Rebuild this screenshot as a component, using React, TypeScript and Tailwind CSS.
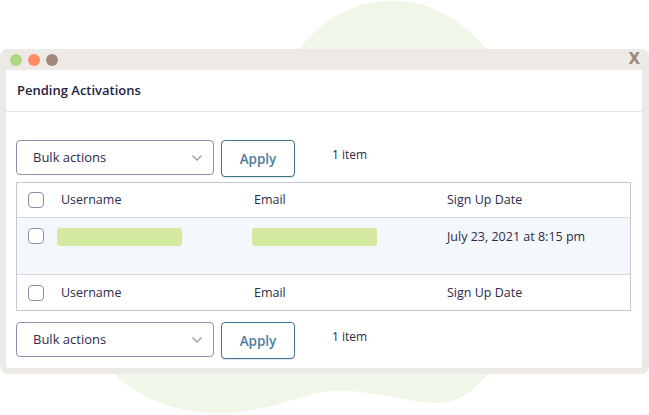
import React from "react";

function Checkbox() {
  return <div className="w-[16px] h-[16px] rounded-[4px] border border-[#8c8fa8] bg-white shrink-0" />;
}

function Toolbar() {
  return (
    <div className="flex items-start">
      <div className="w-[198px] h-[35px] rounded-[4px] border border-[#8c8fb0] bg-white flex items-center justify-between pl-[16px] pr-[10px]">
        <span className="text-[13px] text-[#2c2c4a]">Bulk actions</span>
        <svg width="12" height="8" viewBox="0 0 12 8" fill="none">
          <path d="M1.5 1.5 L6 6 L10.5 1.5" stroke="#9a9ab4" strokeWidth="1.4" />
        </svg>
      </div>
      <div className="ml-[7px] w-[74px] h-[37px] rounded-[4px] border border-[#3d7290] bg-white flex items-center justify-center shadow-[0_1px_0_#e6e6e6]">
        <span className="text-[13.5px] font-semibold text-[#4a7e9e] pt-[2px]">Apply</span>
      </div>
      <span className="ml-[37px] mt-[6px] text-[12px] text-[#2c2c4a]">1 item</span>
    </div>
  );
}

function HeadRow({ bottom }: { bottom?: boolean }) {
  return (
    <div className={`flex items-center h-[35px] bg-white ${bottom ? "" : "border-b border-[#d7d8e0]"}`}>
      <div className="w-[35px] pl-[11px] shrink-0">
        <Checkbox />
      </div>
      <div className="w-[193px] pl-[9px] pt-[1px] text-[12.5px] text-[#2c2c4a]">Username</div>
      <div className="w-[193px] pl-[9px] pt-[1px] text-[12.5px] text-[#2c2c4a]">Email</div>
      <div className="flex-1 pl-[9px] pt-[1px] text-[12.5px] text-[#2c2c4a]">Sign Up Date</div>
    </div>
  );
}

export default function App() {
  return (
    <div
      className="relative w-[649px] h-[415px] bg-white overflow-hidden"
      style={{ fontFamily: '"Open Sans", "Noto Sans", sans-serif' }}
    >
      <svg className="absolute left-0 top-0" width="649" height="415" viewBox="0 0 649 415">
        <path
          d="M290 60 C325 12 360 1 395 1 C432 1 468 22 495 60 L495 360 L488 374 C470 396 452 404 433 403 C400 401 362 388 330 391 C300 394 268 413 220 413 C178 413 140 400 115 374 L115 360 Z"
          fill="#f0f6e8"
        />
      </svg>

      <div className="relative mt-[49px] w-[649px] h-[325px] rounded-[8px] bg-[#ede9e5] flex flex-col">
        <div className="h-[21px] flex items-center pl-[10px] pr-[9px] shrink-0">
          <div className="w-[12px] h-[12px] rounded-full bg-[#b0d783]" />
          <div className="ml-[6px] w-[12px] h-[12px] rounded-full bg-[#ff8a65]" />
          <div className="ml-[6px] w-[12px] h-[12px] rounded-full bg-[#a1887f]" />
          <span className="ml-auto text-[15px] font-bold text-[#9e8880] leading-none" style={{ fontFamily: '"DejaVu Sans", sans-serif' }}>
            X
          </span>
        </div>
        <div className="ml-[6px] mr-[7px] h-[298px] bg-white rounded-b-[3px] flex flex-col">
          <div className="h-[42px] border-b border-[#e3e3ea] flex items-center pl-[11px] shrink-0">
            <span className="text-[13px] font-semibold text-[#1d2340]">Pending Activations</span>
          </div>
          <div className="pl-[10px] pr-[11px] pt-[28px]">
            <Toolbar />
            <div className="mt-[5px] border border-[#c6c7d2]">
              <HeadRow />
              <div className="h-[57px] bg-[#f4f7fb] border-b border-[#d7d8e0] flex items-start pt-[10px]">
                <div className="w-[35px] pl-[11px] shrink-0">
                  <Checkbox />
                </div>
                <div className="w-[193px] pl-[5px]">
                  <div className="w-[125px] h-[18px] rounded-[3px] bg-[#d4eaa0]" />
                </div>
                <div className="w-[193px] pl-[7px]">
                  <div className="w-[125px] h-[18px] rounded-[3px] bg-[#d4eaa0]" />
                </div>
                <div className="flex-1 pl-[9px] text-[12.5px] text-[#2c2c4a] leading-[18px]">July 23, 2021 at 8:15 pm</div>
              </div>
              <HeadRow bottom />
            </div>
            <div className="mt-[11px]">
              <Toolbar />
            </div>
          </div>
        </div>
      </div>
    </div>
  );
}
